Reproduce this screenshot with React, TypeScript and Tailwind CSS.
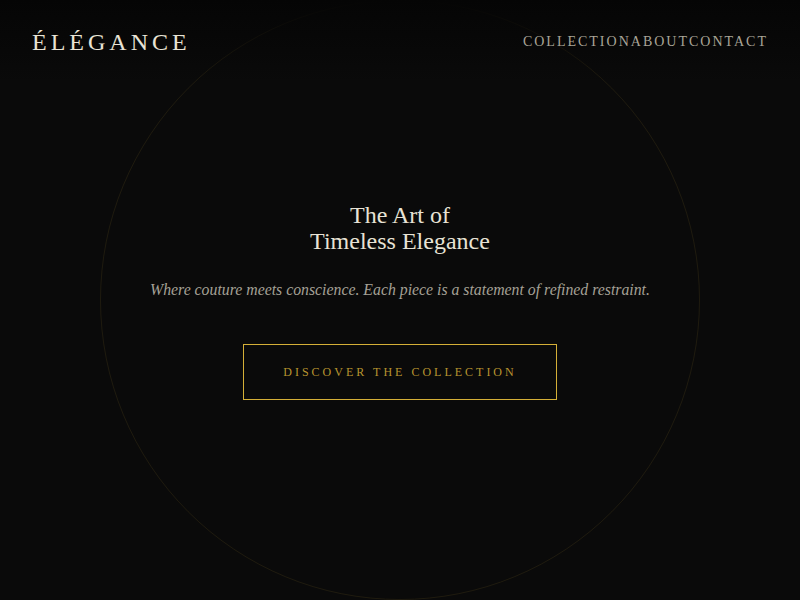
const navItems = ["Collection", "About", "Contact"];

const Header = () => (
  <header className="absolute inset-x-0 top-0 z-10 flex h-[84px] items-center justify-between bg-linear-to-b from-[#050505] to-transparent px-8">
    <a href="#" className="text-[24px] leading-none tracking-[4px] text-[#e8e3d5]">
      ÉLÉGANCE
    </a>
    <nav className="flex">
      {navItems.map((item) => (
        <a
          key={item}
          href="#"
          className="text-[14px] uppercase leading-none tracking-[2px] text-[#a9a597] hover:text-[#d4af37]"
        >
          {item}
        </a>
      ))}
    </nav>
  </header>
);

export default function App() {
  return (
    <div
      className="relative min-h-screen overflow-hidden bg-[#0a0a0a]"
      style={{ fontFamily: '"Liberation Serif", "DejaVu Serif", serif' }}
    >
      <Header />
      <main className="relative flex h-[600px] items-center justify-center">
        {/* decorative ring */}
        <div className="pointer-events-none absolute left-1/2 top-1/2 h-[600px] w-[600px] -translate-x-1/2 -translate-y-1/2 rounded-full border border-[#d4af37]/10" />
        <section className="relative flex flex-col items-center pt-[2px] text-center">
          <h1 className="mb-6 text-[24px] font-normal leading-[26px] text-[#e8e3d5]">
            The Art of
            <br />
            Timeless Elegance
          </h1>
          <p className="text-[15.8px] italic leading-6 text-[#a5a196]">
            Where couture meets conscience. Each piece is a statement of refined restraint.
          </p>
          <button className="mt-[42px] border border-[#d4af37] px-[39px] py-[18px] text-[12px] uppercase leading-[18px] tracking-[3px] text-[#b8942f]">
            Discover the Collection
          </button>
        </section>
      </main>
    </div>
  );
}
